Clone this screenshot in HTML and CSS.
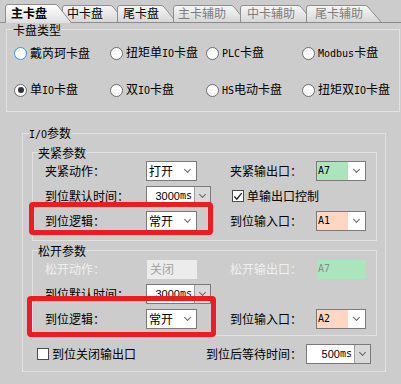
FILE: index.html
```html
<!DOCTYPE html>
<html>
<head>
    <meta charset="utf-8">
    <title>卡盘设置</title>
    <link rel="stylesheet" href="styles.css">
</head>
<body>

<svg class="tabs" width="401" height="23" viewBox="0 0 401 23">
    <defs>
        <linearGradient id="tabOff" x1="0" y1="0" x2="0" y2="1">
            <stop offset="0" stop-color="#f7f7f7"/>
            <stop offset="1" stop-color="#d5d5d5"/>
        </linearGradient>
        <linearGradient id="tabOn" x1="0" y1="0" x2="0" y2="1">
            <stop offset="0" stop-color="#ffffff"/>
            <stop offset="1" stop-color="#dedede"/>
        </linearGradient>
    </defs>
    <path class="tab-off" d="M62.5 23 V8 Q62.5 5.5 65 5.5 H110 Q112 5.5 113 7 L126 23"/>
    <path class="tab-off" d="M117.5 23 V8 Q117.5 5.5 120 5.5 H161 Q163 5.5 164 7 L177 23"/>
    <path class="tab-off" d="M173.5 23 V8 Q173.5 5.5 176 5.5 H231 Q233 5.5 234 7 L247 23"/>
    <path class="tab-off" d="M240.5 23 V8 Q240.5 5.5 243 5.5 H298 Q300 5.5 301 7 L314 23"/>
    <path class="tab-off" d="M306.5 23 V8 Q306.5 5.5 309 5.5 H365 Q367 5.5 368 7 L382 23"/>
    <line x1="0" y1="22.5" x2="401" y2="22.5" stroke="#8c8c8c"/>
    <path class="tab-on" d="M5.5 23.5 V7 Q5.5 4.5 8 4.5 H55 Q57 4.5 58 6 L72 23.5"/>
    <text class="tab-text tab-sel" x="11" y="18">主卡盘</text>
    <text class="tab-text" x="67" y="18">中卡盘</text>
    <text class="tab-text" x="123" y="18">尾卡盘</text>
    <text class="tab-text tab-dis" x="178" y="18">主卡辅助</text>
    <text class="tab-text tab-dis" x="247" y="18">中卡辅助</text>
    <text class="tab-text tab-dis" x="315" y="18">尾卡辅助</text>
</svg>

<fieldset class="type-group">
    <legend>卡盘类型</legend>
    <div class="radios">
        <label class="radio"><span class="dot focus"></span><span>戴芮珂卡盘</span></label>
        <label class="radio"><span class="dot"></span><span>扭矩单<span class="en">IO</span>卡盘</span></label>
        <label class="radio"><span class="dot"></span><span><span class="en">PLC</span>卡盘</span></label>
        <label class="radio"><span class="dot"></span><span><span class="en">Modbus</span>卡盘</span></label>
        <label class="radio"><span class="dot checked"></span><span>单<span class="en">IO</span>卡盘</span></label>
        <label class="radio"><span class="dot"></span><span>双<span class="en">IO</span>卡盘</span></label>
        <label class="radio"><span class="dot"></span><span><span class="en">HS</span>电动卡盘</span></label>
        <label class="radio"><span class="dot"></span><span>扭矩双<span class="en">IO</span>卡盘</span></label>
    </div>
</fieldset>

<fieldset class="io-group">
    <legend><span class="en">I/O</span>参数</legend>

    <fieldset class="sub-group clamp">
        <legend>夹紧参数</legend>
        <div class="param-grid">
            <span>夹紧动作：</span>
            <div class="combo"><span>打开</span><span class="chev"></span></div>
            <span>夹紧输出口：</span>
            <div class="port"><span class="port-val en out">A7</span><span class="port-arrow"><span class="chev"></span></span></div>

            <span>到位默认时间：</span>
            <div class="spin"><span class="spin-val"><span class="num">3000</span><span class="en">ms</span></span><span class="spin-btn"><span class="chev"></span></span></div>
            <label class="check wide"><span class="box"><svg width="11" height="11" viewBox="0 0 11 11"><path d="M1.5 5.5 L4.2 8.5 L9.5 1.8" fill="none" stroke="#222" stroke-width="1.4"/></svg></span><span>单输出口控制</span></label>

            <span>到位逻辑：</span>
            <div class="combo"><span>常开</span><span class="chev"></span></div>
            <span>到位输入口：</span>
            <div class="port"><span class="port-val en in">A1</span><span class="port-arrow"><span class="chev"></span></span></div>
        </div>
    </fieldset>

    <fieldset class="sub-group release">
        <legend>松开参数</legend>
        <div class="param-grid">
            <span class="disabled">松开动作：</span>
            <div class="combo off"><span>关闭</span></div>
            <span class="disabled">松开输出口：</span>
            <div class="port off"><span class="port-val en out">A7</span></div>

            <span>到位默认时间：</span>
            <div class="spin"><span class="spin-val"><span class="num">3000</span><span class="en">ms</span></span><span class="spin-btn"><span class="chev"></span></span></div>
            <span></span>
            <span></span>

            <span>到位逻辑：</span>
            <div class="combo"><span>常开</span><span class="chev"></span></div>
            <span>到位输入口：</span>
            <div class="port"><span class="port-val en in">A2</span><span class="port-arrow"><span class="chev"></span></span></div>
        </div>
    </fieldset>

    <div class="bottom-row">
        <label class="check"><span class="box"></span><span>到位关闭输出口</span></label>
        <span>到位后等待时间：</span>
        <div class="spin"><span class="spin-val"><span class="num">500</span><span class="en">ms</span></span><span class="spin-btn"><span class="chev"></span></span></div>
    </div>
</fieldset>

<div class="mark mark-1"></div>
<div class="mark mark-2"></div>

</body>
</html>
```

FILE: styles.css
```css
* {
    box-sizing: border-box;
    margin: 0;
    padding: 0;
}
body {
    background-color: #cccccc;
    font-family: "Noto Sans CJK SC", sans-serif;
    font-size: 12px;
    line-height: 14px;
    color: #000;
    width: 401px;
    height: 384px;
    overflow: hidden;
}
.en {
    font-family: "DejaVu Sans Mono", monospace;
    font-size: 10px;
}
.num {
    font-family: "Liberation Sans", sans-serif;
    font-size: 11px;
}

/* tab strip */
.tabs {
    display: block;
}
.tab-off {
    fill: url(#tabOff);
    stroke: #8e8e8e;
}
.tab-on {
    fill: url(#tabOn);
    stroke: #8e8e8e;
}
.tab-text {
    font-family: "Noto Sans CJK SC", sans-serif;
    font-size: 12px;
    fill: #000;
}
.tab-sel {
    font-weight: bold;
}
.tab-dis {
    fill: #7c7c7c;
}

/* group boxes */
fieldset {
    border: 1px solid #e1e1e1;
    min-width: 0;
}
legend {
    line-height: 13px;
    padding: 0;
}
.type-group {
    margin-left: 6px;
    width: 394px;
    padding: 7px 0 11px 7px;
}
.type-group legend {
    margin-left: -1px;
}
.radios {
    display: grid;
    grid-template-columns: repeat(4, 96px);
    row-gap: 17px;
}
.radio {
    display: flex;
    align-items: center;
    height: 20px;
    gap: 3px;
    white-space: nowrap;
}
.dot {
    width: 13px;
    height: 13px;
    border-radius: 50%;
    border: 1px solid #6c6c6c;
    background-color: #fff;
    display: flex;
    align-items: center;
    justify-content: center;
    flex-shrink: 0;
}
.dot.focus {
    border: 1.5px solid #3a8ee6;
}
.dot.checked::after {
    content: "";
    width: 6px;
    height: 6px;
    border-radius: 50%;
    background-color: #333;
}

.io-group {
    margin: 14px 0 0 22px;
    width: 364px;
    padding: 5px 8px 7px 9px;
}
.io-group > legend {
    margin-left: -3px;
}
.sub-group {
    padding-left: 12px;
}
.sub-group legend {
    margin-left: -7px;
}
.clamp {
    padding-top: 2px;
    padding-bottom: 9px;
}
.release {
    margin-top: 3px;
    padding-top: 2px;
    padding-bottom: 6px;
}
.param-grid {
    display: grid;
    grid-template-columns: 101px 84px 86px auto;
    grid-auto-rows: 20px;
    row-gap: 5px;
    align-items: center;
    white-space: nowrap;
}
.disabled {
    color: #efefef;
}

/* controls */
.chev {
    width: 5px;
    height: 5px;
    border-right: 1px solid #666;
    border-bottom: 1px solid #666;
    transform: translateY(-2px) rotate(45deg);
}
.combo {
    width: 51px;
    height: 20px;
    background-color: #fff;
    border: 1px solid #7a7a7a;
    display: flex;
    align-items: center;
    justify-content: space-between;
    padding: 0 6px 0 2px;
}
.combo.off {
    width: 50px;
    height: 19px;
    margin-left: 1px;
    background-color: #ececec;
    border-color: #ececec;
    color: #a4a4a4;
}
.port {
    width: 50px;
    height: 20px;
    border: 1px solid #7a7a7a;
    display: flex;
}
.port-val {
    flex: 1;
    display: flex;
    align-items: center;
    padding-left: 1px;
}
.port-val.out {
    background-color: #abe4bd;
}
.port-val.in {
    background-color: #ffd6c2;
}
.port-arrow {
    width: 17px;
    background-color: #fff;
    display: flex;
    align-items: center;
    justify-content: center;
}
.port.off {
    width: 49px;
    height: 19px;
    border: none;
    margin-left: 1px;
    color: #8c8c8c;
}
.spin {
    width: 65px;
    height: 20px;
    border: 1px solid #7a7a7a;
    background-color: #fff;
    display: flex;
}
.spin-val {
    flex: 1;
    display: flex;
    align-items: center;
    justify-content: flex-end;
    padding-right: 2px;
}
.spin-btn {
    width: 16px;
    background-color: #d9d9d9;
    border-left: 1px solid #a0a0a0;
    display: flex;
    align-items: center;
    justify-content: center;
}
.check {
    display: flex;
    align-items: center;
    gap: 3px;
}
.check.wide {
    grid-column: 3 / 5;
    margin-left: 2px;
}
.box {
    width: 12px;
    height: 12px;
    border: 1px solid #4a4a4a;
    background-color: #fff;
    display: flex;
    align-items: center;
    justify-content: center;
}
.bottom-row {
    margin-top: 8px;
    padding-left: 5px;
    height: 20px;
    display: grid;
    grid-template-columns: 169px 100px 65px;
    align-items: center;
    white-space: nowrap;
}

/* red highlight marks drawn over the form */
.mark {
    position: absolute;
    border: 5px solid #ec1c24;
    border-radius: 4px;
}
.mark-1 {
    left: 29px;
    top: 202px;
    width: 184px;
    height: 33px;
}
.mark-2 {
    left: 27px;
    top: 296px;
    width: 189px;
    height: 41px;
}
```
